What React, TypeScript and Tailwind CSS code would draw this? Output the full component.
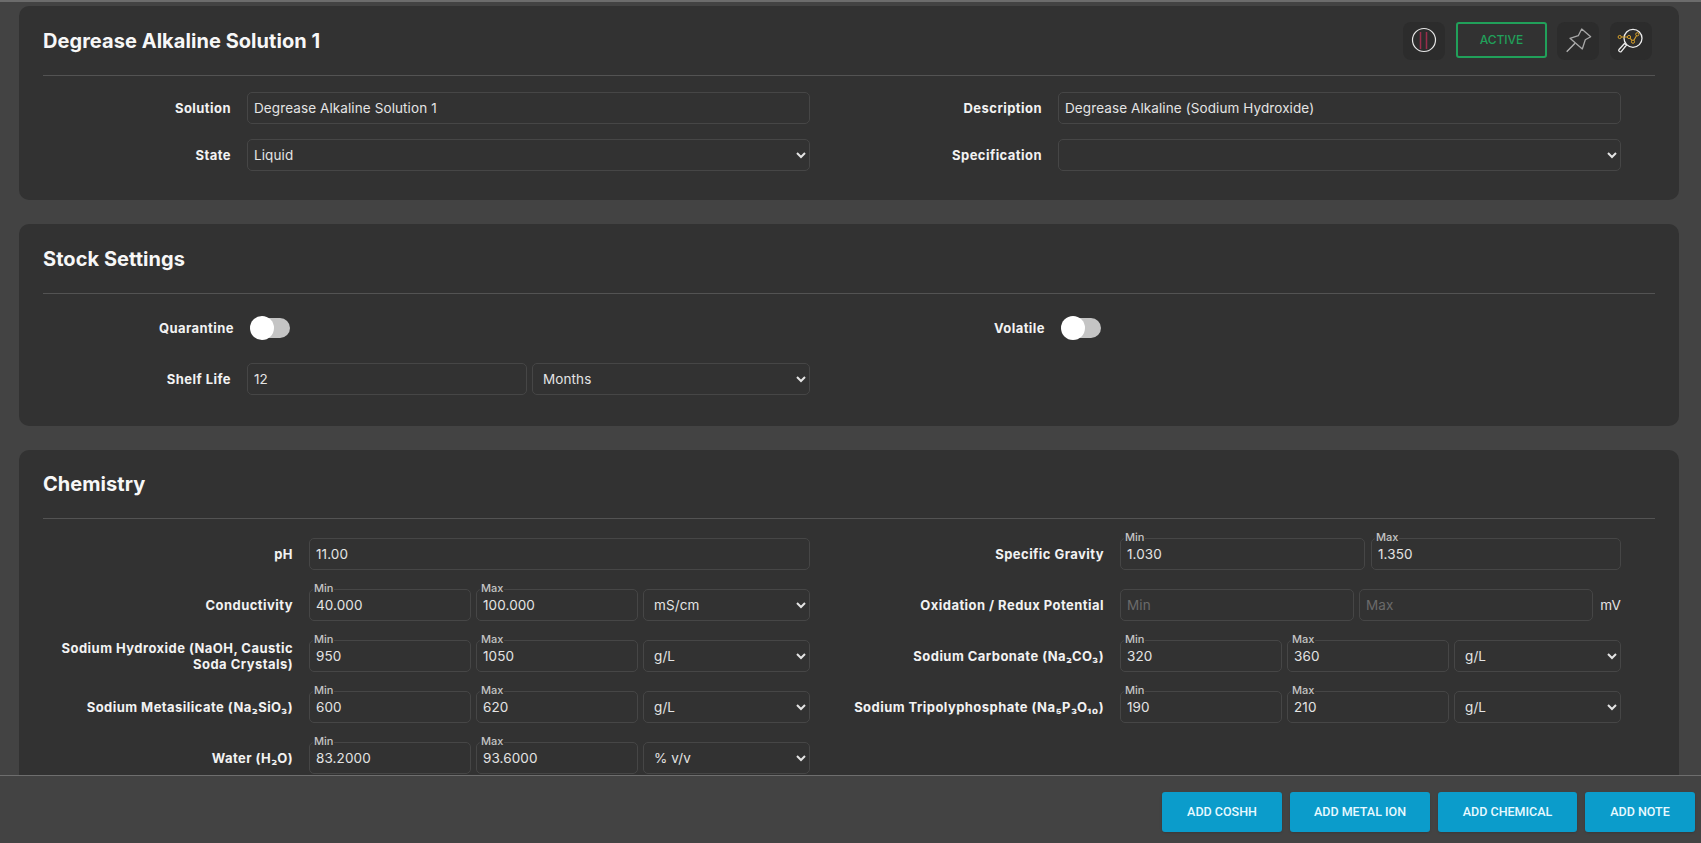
import React from "react";

const inputCls =
  "h-8 w-full min-w-0 rounded-[5px] border border-[#464646] bg-[#323232] px-[6px] text-[13.5px] tracking-[0.1px] text-[#e4e4e4] outline-none placeholder:text-[#6a6a6a]";
const selectCls =
  "h-8 w-full min-w-0 rounded-[5px] border border-[#464646] bg-[#323232] pr-[2px] text-[13.5px] tracking-[0.1px] text-[#e4e4e4] outline-none";
const labelCls =
  "text-right text-[13px] leading-[16px] font-bold tracking-[0.45px] text-[#f2f2f2]";

function Text({ v, ph }: { v?: string; ph?: string }) {
  return <input className={inputCls} defaultValue={v} placeholder={ph} readOnly />;
}

function Sel({ v, unit }: { v: string; unit?: boolean }) {
  return (
    <select className={`${selectCls} ${unit ? "pl-[6px]" : "pl-[2px]"}`} defaultValue={v}>
      <option value={v}>{v}</option>
    </select>
  );
}

function Cap({ label, v }: { label: string; v: string }) {
  return (
    <div className="relative min-w-0">
      <span className="absolute left-[4px] top-[-7px] bg-[#323232] px-[1px] text-[11px] leading-[12px] font-medium text-[#c4c4c4]">
        {label}
      </span>
      <Text v={v} />
    </div>
  );
}

function Card({
  title,
  actions,
  headH,
  hrGap,
  pb,
  children,
}: {
  title: string;
  actions?: React.ReactNode;
  headH: string;
  hrGap: string;
  pb: string;
  children: React.ReactNode;
}) {
  return (
    <section className={`shrink-0 rounded-[10px] bg-[#323232] px-6 ${pb}`}>
      <div className={`box-content flex ${headH} items-center justify-between border-b border-[#535353]`}>
        <h2 className="text-[20px] leading-[24px] font-bold tracking-[0.05px] text-[#f7f7f7]">{title}</h2>
        {actions}
      </div>
      <div className={hrGap}>{children}</div>
    </section>
  );
}

function Row({ children }: { children: React.ReactNode }) {
  return <div className="grid w-[1578px] grid-cols-[767px_767px] gap-x-[44px]">{children}</div>;
}

function F1({ label, children }: { label: string; children: React.ReactNode }) {
  return (
    <div className="grid grid-cols-[188px_1fr] items-center gap-x-4">
      <div className={labelCls}>{label}</div>
      <div className="flex min-w-0 gap-[5px]">{children}</div>
    </div>
  );
}

function F2({ label, children }: { label: React.ReactNode; children?: React.ReactNode }) {
  return (
    <div className="grid grid-cols-[250px_1fr] items-center gap-x-4">
      <div className={`${labelCls} -ml-[8px]`}>{label}</div>
      <div className="grid min-w-0">{children}</div>
    </div>
  );
}

function Triple({ min, max, unit }: { min: string; max: string; unit: string }) {
  return (
    <div className="grid grid-cols-[162px_162px_1fr] gap-x-[5px]">
      <Cap label="Min" v={min} />
      <Cap label="Max" v={max} />
      <Sel v={unit} unit />
    </div>
  );
}

function Toggle() {
  return (
    <div className="relative h-6 w-10">
      <div className="absolute left-[1px] top-[2px] h-5 w-[39px] rounded-full bg-[#c4c4c4]" />
      <div className="absolute left-0 top-0 h-6 w-6 rounded-full bg-white" />
    </div>
  );
}

function IconBox({ children }: { children: React.ReactNode }) {
  return <div className="h-[38px] w-[42px] rounded-lg bg-[#2c2c2c]">{children}</div>;
}

function Actions() {
  return (
    <div className="mr-[3px] flex items-start pt-[1px]">
      <IconBox>
        <svg width="42" height="38" viewBox="0 0 42 38" fill="none">
          <circle cx="21" cy="18" r="11.5" stroke="#e6e6e6" strokeWidth="1.2" />
          <path d="M17.5 10v17M23.5 10v17" stroke="#9a2e4b" strokeWidth="1.5" />
        </svg>
      </IconBox>
      <div className="ml-[11px] flex h-[36px] w-[91px] items-center justify-center rounded-[3px] border-2 border-[#21a05a] text-[12px] font-medium text-[#21a05a]">
        ACTIVE
      </div>
      <div className="ml-[10px]">
        <IconBox>
          <svg width="42" height="38" viewBox="0 0 42 38" fill="none">
            <path d="M9.7 29.7 18 21.3" stroke="#b5b5b5" strokeWidth="1.3" />
            <path d="M13 16.3 21.3 13.7 24.7 7 33.7 14.7 28.3 17.7 25.3 27Z" stroke="#a8a8a8" strokeWidth="1.3" strokeLinejoin="round" />
          </svg>
        </IconBox>
      </div>
      <div className="ml-[11px]">
        <IconBox>
          <svg width="42" height="38" viewBox="0 0 42 38" fill="none">
            <circle cx="23" cy="16.3" r="9" stroke="#ececec" strokeWidth="1.3" />
            <path d="M16.5 23 14.5 21.5 9 27.5c-1 1.3 .8 3 2.2 2.2Z" stroke="#ececec" strokeWidth="1.3" strokeLinejoin="round" />
            <path d="M9.7 15 19 15 23 19.7 27.3 12.3" stroke="#d6a02a" strokeWidth="1.1" />
            <circle cx="9.7" cy="15" r="1.6" stroke="#d6a02a" strokeWidth="1" fill="#2c2c2c" />
            <circle cx="19" cy="15" r="1.6" stroke="#d6a02a" strokeWidth="1" fill="#2c2c2c" />
            <circle cx="23" cy="19.7" r="1.6" stroke="#d6a02a" strokeWidth="1" fill="#2c2c2c" />
            <circle cx="27.3" cy="12.3" r="1.6" stroke="#d6a02a" strokeWidth="1" fill="#2c2c2c" />
          </svg>
        </IconBox>
      </div>
    </div>
  );
}

function Btn({ w, children }: { w: string; children: string }) {
  return (
    <button className={`${w} h-10 rounded-[3px] bg-[#0b9ccb] text-[12.5px] font-medium text-[#e8f9ff] shadow-sm`} style={{ fontFamily: "Roboto, sans-serif" }}>
      {children}
    </button>
  );
}

export default function App() {
  return (
    <div className="flex h-[843px] w-[1701px] flex-col overflow-hidden bg-[#434343]" style={{ fontFamily: "Inter, sans-serif" }}>
      <main className="flex min-h-0 flex-1 flex-col gap-[24px] overflow-hidden border-t-2 border-[#6c6c6c] pl-[19px] pr-[22px] pt-[4px]">
        <Card title="Degrease Alkaline Solution 1" actions={<Actions />} headH="h-[69px]" hrGap="pt-[16px]" pb="pb-[29px]">
          <div className="flex flex-col gap-[15px]">
            <Row>
              <F1 label="Solution"><Text v="Degrease Alkaline Solution 1" /></F1>
              <F1 label="Description"><Text v="Degrease Alkaline (Sodium Hydroxide)" /></F1>
            </Row>
            <Row>
              <F1 label="State"><Sel v="Liquid" /></F1>
              <F1 label="Specification"><Sel v="" /></F1>
            </Row>
          </div>
        </Card>

        <Card title="Stock Settings" headH="h-[69px]" hrGap="pt-[22px]" pb="pb-[31px]">
          <div className="flex flex-col gap-[23px]">
            <Row>
              <div className="grid grid-cols-[191px_1fr] items-center gap-x-4">
                <div className={labelCls}>Quarantine</div>
                <Toggle />
              </div>
              <div className="grid grid-cols-[191px_1fr] items-center gap-x-4">
                <div className={labelCls}>Volatile</div>
                <Toggle />
              </div>
            </Row>
            <Row>
              <F1 label="Shelf Life">
                <Text v="12" />
                <Sel v="Months" unit />
              </F1>
              <div />
            </Row>
          </div>
        </Card>

        <Card title="Chemistry" headH="h-[68px]" hrGap="pt-[19px]" pb="pb-[24px]">
          <div className="flex flex-col gap-[19px]">
            <Row>
              <F2 label="pH"><Text v="11.00" /></F2>
              <F2 label="Specific Gravity">
                <div className="grid grid-cols-[245px_1fr] gap-x-[6px]">
                  <Cap label="Min" v="1.030" />
                  <Cap label="Max" v="1.350" />
                </div>
              </F2>
            </Row>
            <Row>
              <F2 label="Conductivity"><Triple min="40.000" max="100.000" unit="mS/cm" /></F2>
              <F2 label="Oxidation / Redux Potential">
                <div className="grid grid-cols-[234px_234px_1fr] items-center gap-x-[5px]">
                  <Text ph="Min" />
                  <Text ph="Max" />
                  <span className="text-right text-[13.5px] tracking-[0.1px] text-[#e4e4e4]">mV</span>
                </div>
              </F2>
            </Row>
            <Row>
              <F2 label={<>Sodium Hydroxide (NaOH, Caustic<br />Soda Crystals)</>}>
                <Triple min="950" max="1050" unit="g/L" />
              </F2>
              <F2 label="Sodium Carbonate (Na₂CO₃)"><Triple min="320" max="360" unit="g/L" /></F2>
            </Row>
            <Row>
              <F2 label="Sodium Metasilicate (Na₂SiO₃)"><Triple min="600" max="620" unit="g/L" /></F2>
              <F2 label="Sodium Tripolyphosphate (Na₅P₃O₁₀)"><Triple min="190" max="210" unit="g/L" /></F2>
            </Row>
            <Row>
              <F2 label="Water (H₂O)"><Triple min="83.2000" max="93.6000" unit="% v/v" /></F2>
              <div />
            </Row>
          </div>
        </Card>
      </main>
      <footer className="flex h-[68px] shrink-0 items-center justify-end gap-2 border-t border-[#6e6e6e] bg-[#434343] pr-[6px] pt-[5px]">
        <Btn w="w-[120px]">ADD COSHH</Btn>
        <Btn w="w-[140px]">ADD METAL ION</Btn>
        <Btn w="w-[139px]">ADD CHEMICAL</Btn>
        <Btn w="w-[110px]">ADD NOTE</Btn>
      </footer>
    </div>
  );
}
